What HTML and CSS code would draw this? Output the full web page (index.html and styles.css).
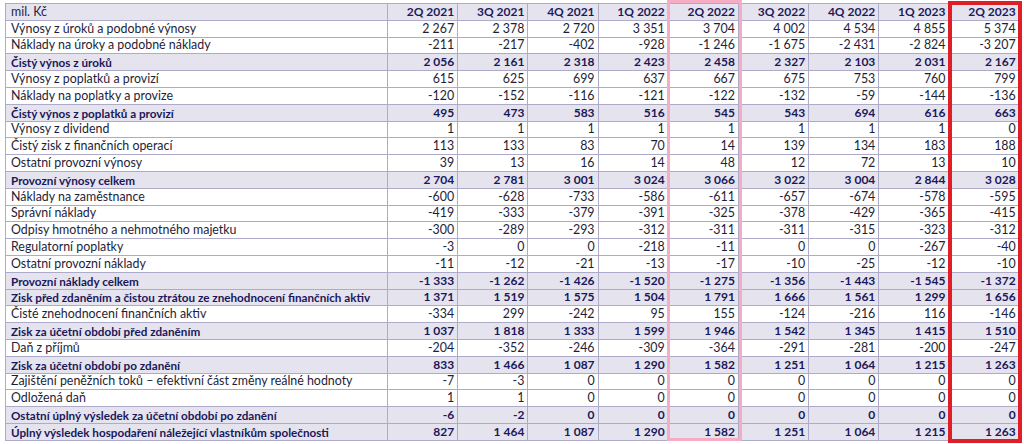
FILE: index.html
```html
<!DOCTYPE html>
<html lang="cs">
<head>
<meta charset="utf-8">
<title>Výsledovka</title>
<link rel="stylesheet" href="styles.css">
</head>
<body>
<div class="wrap">
<table class="fin">
<colgroup>
<col class="c-label">
<col class="c-num"><col class="c-num"><col class="c-num"><col class="c-num"><col class="c-num"><col class="c-num"><col class="c-num"><col class="c-num"><col class="c-num">
</colgroup>
<thead>
<tr class="hd"><th class="lbl">mil. Kč</th><th>2Q 2021</th><th>3Q 2021</th><th>4Q 2021</th><th>1Q 2022</th><th>2Q 2022</th><th>3Q 2022</th><th>4Q 2022</th><th>1Q 2023</th><th>2Q 2023</th></tr>
</thead>
<tbody>
<tr><td class="lbl">Výnosy z úroků a podobné výnosy</td><td>2 267</td><td>2 378</td><td>2 720</td><td>3 351</td><td>3 704</td><td>4 002</td><td>4 534</td><td>4 855</td><td>5 374</td></tr>
<tr><td class="lbl">Náklady na úroky a podobné náklady</td><td>-211</td><td>-217</td><td>-402</td><td>-928</td><td>-1 246</td><td>-1 675</td><td>-2 431</td><td>-2 824</td><td>-3 207</td></tr>
<tr class="sum"><td class="lbl">Čistý výnos z úroků</td><td>2 056</td><td>2 161</td><td>2 318</td><td>2 423</td><td>2 458</td><td>2 327</td><td>2 103</td><td>2 031</td><td>2 167</td></tr>
<tr><td class="lbl">Výnosy z poplatků a provizí</td><td>615</td><td>625</td><td>699</td><td>637</td><td>667</td><td>675</td><td>753</td><td>760</td><td>799</td></tr>
<tr><td class="lbl">Náklady na poplatky a provize</td><td>-120</td><td>-152</td><td>-116</td><td>-121</td><td>-122</td><td>-132</td><td>-59</td><td>-144</td><td>-136</td></tr>
<tr class="sum"><td class="lbl">Čistý výnos z poplatků a provizí</td><td>495</td><td>473</td><td>583</td><td>516</td><td>545</td><td>543</td><td>694</td><td>616</td><td>663</td></tr>
<tr><td class="lbl">Výnosy z dividend</td><td>1</td><td>1</td><td>1</td><td>1</td><td>1</td><td>1</td><td>1</td><td>1</td><td>0</td></tr>
<tr><td class="lbl">Čistý zisk z finančních operací</td><td>113</td><td>133</td><td>83</td><td>70</td><td>14</td><td>139</td><td>134</td><td>183</td><td>188</td></tr>
<tr><td class="lbl">Ostatní provozní výnosy</td><td>39</td><td>13</td><td>16</td><td>14</td><td>48</td><td>12</td><td>72</td><td>13</td><td>10</td></tr>
<tr class="sum"><td class="lbl">Provozní výnosy celkem</td><td>2 704</td><td>2 781</td><td>3 001</td><td>3 024</td><td>3 066</td><td>3 022</td><td>3 004</td><td>2 844</td><td>3 028</td></tr>
<tr><td class="lbl">Náklady na zaměstnance</td><td>-600</td><td>-628</td><td>-733</td><td>-586</td><td>-611</td><td>-657</td><td>-674</td><td>-578</td><td>-595</td></tr>
<tr><td class="lbl">Správní náklady</td><td>-419</td><td>-333</td><td>-379</td><td>-391</td><td>-325</td><td>-378</td><td>-429</td><td>-365</td><td>-415</td></tr>
<tr><td class="lbl">Odpisy hmotného a nehmotného majetku</td><td>-300</td><td>-289</td><td>-293</td><td>-312</td><td>-311</td><td>-311</td><td>-315</td><td>-323</td><td>-312</td></tr>
<tr><td class="lbl">Regulatorní poplatky</td><td>-3</td><td>0</td><td>0</td><td>-218</td><td>-11</td><td>0</td><td>0</td><td>-267</td><td>-40</td></tr>
<tr><td class="lbl">Ostatní provozní náklady</td><td>-11</td><td>-12</td><td>-21</td><td>-13</td><td>-17</td><td>-10</td><td>-25</td><td>-12</td><td>-10</td></tr>
<tr class="sum"><td class="lbl">Provozní náklady celkem</td><td>-1 333</td><td>-1 262</td><td>-1 426</td><td>-1 520</td><td>-1 275</td><td>-1 356</td><td>-1 443</td><td>-1 545</td><td>-1 372</td></tr>
<tr class="sum"><td class="lbl">Zisk před zdaněním a čistou ztrátou ze znehodnocení finančních aktiv</td><td>1 371</td><td>1 519</td><td>1 575</td><td>1 504</td><td>1 791</td><td>1 666</td><td>1 561</td><td>1 299</td><td>1 656</td></tr>
<tr><td class="lbl">Čisté znehodnocení finančních aktiv</td><td>-334</td><td>299</td><td>-242</td><td>95</td><td>155</td><td>-124</td><td>-216</td><td>116</td><td>-146</td></tr>
<tr class="sum"><td class="lbl">Zisk za účetní období před zdaněním</td><td>1 037</td><td>1 818</td><td>1 333</td><td>1 599</td><td>1 946</td><td>1 542</td><td>1 345</td><td>1 415</td><td>1 510</td></tr>
<tr><td class="lbl">Daň z příjmů</td><td>-204</td><td>-352</td><td>-246</td><td>-309</td><td>-364</td><td>-291</td><td>-281</td><td>-200</td><td>-247</td></tr>
<tr class="sum"><td class="lbl">Zisk za účetní období po zdanění</td><td>833</td><td>1 466</td><td>1 087</td><td>1 290</td><td>1 582</td><td>1 251</td><td>1 064</td><td>1 215</td><td>1 263</td></tr>
<tr><td class="lbl">Zajištění peněžních toků – efektivní část změny reálné hodnoty</td><td>-7</td><td>-3</td><td>0</td><td>0</td><td>0</td><td>0</td><td>0</td><td>0</td><td>0</td></tr>
<tr><td class="lbl">Odložená daň</td><td>1</td><td>1</td><td>0</td><td>0</td><td>0</td><td>0</td><td>0</td><td>0</td><td>0</td></tr>
<tr class="sum"><td class="lbl">Ostatní úplný výsledek za účetní období po zdanění</td><td>-6</td><td>-2</td><td>0</td><td>0</td><td>0</td><td>0</td><td>0</td><td>0</td><td>0</td></tr>
<tr class="sum"><td class="lbl">Úplný výsledek hospodaření náležející vlastníkům společnosti</td><td>827</td><td>1 464</td><td>1 087</td><td>1 290</td><td>1 582</td><td>1 251</td><td>1 064</td><td>1 215</td><td>1 263</td></tr>
</tbody>
</table>
<div class="hl hl-pink"></div>
<div class="hl hl-red"></div>
</div>
</body>
</html>
```
FILE: styles.css
```css
html, body {
  margin: 0;
  padding: 0;
  background: #ffffff;
}

.wrap {
  position: relative;
  width: 1024px;
  height: 444px;
  padding: 3px 0 0 5px;
  box-sizing: border-box;
}

.fin {
  border-collapse: collapse;
  table-layout: fixed;
  width: 1014px;
  font-family: Lato, "Open Sans", "Liberation Sans", sans-serif;
  font-size: 12.4px;
  color: #1e1e38;
}

.c-label { width: 382px; }
.c-num { width: 70.2px; }

.fin th,
.fin td {
  border: 1px solid #adabc9;
  height: 15.8px;
  padding: 0 3px 0 5px;
  line-height: 14px;
  text-align: right;
  white-space: nowrap;
  overflow: hidden;
}

.fin .lbl {
  text-align: left;
  padding-left: 5px;
}

.hd th {
  background: #e5e4ee;
  color: #1d1a5c;
  font-weight: 700;
  font-size: 12px;
}

.hd th.lbl {
  font-weight: 400;
  font-size: 12.4px;
  color: #24224a;
}

.sum td {
  background: #e5e4ee;
  color: #1b175a;
  font-weight: 700;
  font-size: 12px;
}

.sum td.lbl {
  font-size: 11.7px;
}

.hl {
  position: absolute;
  box-sizing: border-box;
  pointer-events: none;
}

.hl-pink {
  left: 667px;
  top: 0;
  width: 75px;
  height: 441px;
  border: 3px solid #f4adc4;
}

.hl-red {
  left: 948px;
  top: 1px;
  width: 74px;
  height: 442px;
  border: 4px solid #e01e28;
}
```
